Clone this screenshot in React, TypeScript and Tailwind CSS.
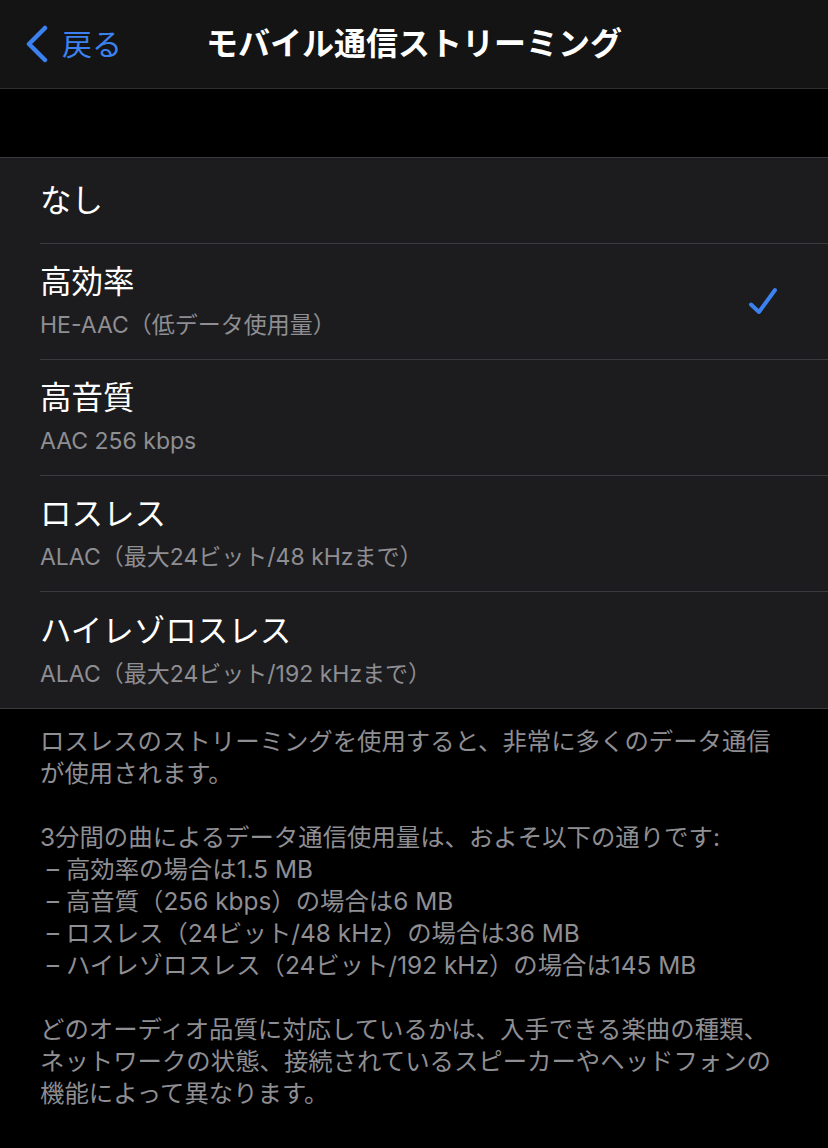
import React from 'react';

// Settings screen: cellular streaming quality (iOS dark style)

interface QualityOption {
  title: string;
  detail?: string;
  selected?: boolean;
}

const options: QualityOption[] = [
  { title: 'なし' },
  { title: '高効率', detail: 'HE-AAC（低データ使用量）', selected: true },
  { title: '高音質', detail: 'AAC 256 kbps' },
  { title: 'ロスレス', detail: 'ALAC（最大24ビット/48 kHzまで）' },
  { title: 'ハイレゾロスレス', detail: 'ALAC（最大24ビット/192 kHzまで）' },
];

const font = { fontFamily: 'Inter, "Noto Sans CJK JP", "Noto Sans", sans-serif' };

function Check() {
  return (
    <svg width="34" height="34" viewBox="0 0 34 34" fill="none">
      <path
        d="M5 19.5 L13 27 L29 5"
        stroke="#3b82f0"
        strokeWidth="4"
        strokeLinecap="round"
        strokeLinejoin="round"
      />
    </svg>
  );
}

function OptionRow({ option, last }: { option: QualityOption; last: boolean }) {
  return (
    <div className="pl-[40px]">
      <div
        className={
          'flex items-center pr-[48px] ' +
          (option.detail ? 'h-[116px]' : 'h-[86px]') +
          (last ? '' : ' border-b border-[#3a3a3e]')
        }
      >
        <div className="flex-1 flex flex-col">
          <span className="text-[31.5px] leading-[38px] text-white">{option.title}</span>
          {option.detail && (
            <span className="text-[23px] leading-[30px] text-[#8e8e93] mt-[9px]">
              {option.detail}
            </span>
          )}
        </div>
        {option.selected && <Check />}
      </div>
    </div>
  );
}

export default function App() {
  return (
    <div className="w-[828px] h-[1148px] bg-black overflow-hidden" style={font}>
      {/* Navigation bar */}
      <div className="relative h-[89px] bg-[#141414] border-b border-[#2e2e30] flex items-center">
        <div className="flex items-center pl-[24px] gap-[12px]">
          <svg width="26" height="38" viewBox="0 0 26 38" fill="none">
            <path
              d="M21 3 L5 19 L21 35"
              stroke="#3b82f0"
              strokeWidth="4.5"
              strokeLinecap="round"
              strokeLinejoin="round"
            />
          </svg>
          <span className="text-[30px] text-[#3b82f0] leading-none">戻る</span>
        </div>
        <div className="absolute inset-0 flex items-center justify-center pointer-events-none">
          <span className="text-[32px] font-bold text-white leading-none">
            モバイル通信ストリーミング
          </span>
        </div>
      </div>

      {/* Spacer */}
      <div className="h-[69px] border-b border-[#3a3a3e]" />

      {/* Options list */}
      <div className="bg-[#1c1c1e] border-b border-[#3a3a3e]">
        {options.map((o, i) => (
          <OptionRow key={o.title} option={o} last={i === options.length - 1} />
        ))}
      </div>

      {/* Footer note */}
      <div className="px-[40px] pt-[16px] text-[24.4px] leading-[32px] text-[#8e8e93] whitespace-nowrap">
        <p>
          ロスレスのストリーミングを使用すると、非常に多くのデータ通信
          <br />
          が使用されます。
        </p>
        <p className="mt-[32px]">3分間の曲によるデータ通信使用量は、およそ以下の通りです:</p>
        <p>&nbsp;– 高効率の場合は1.5 MB</p>
        <p>&nbsp;– 高音質（256 kbps）の場合は6 MB</p>
        <p>&nbsp;– ロスレス（24ビット/48 kHz）の場合は36 MB</p>
        <p>&nbsp;– ハイレゾロスレス（24ビット/192 kHz）の場合は145 MB</p>
        <p className="mt-[32px]">
          どのオーディオ品質に対応しているかは、入手できる楽曲の種類、
          <br />
          ネットワークの状態、接続されているスピーカーやヘッドフォンの
          <br />
          機能によって異なります。
        </p>
      </div>
    </div>
  );
}
